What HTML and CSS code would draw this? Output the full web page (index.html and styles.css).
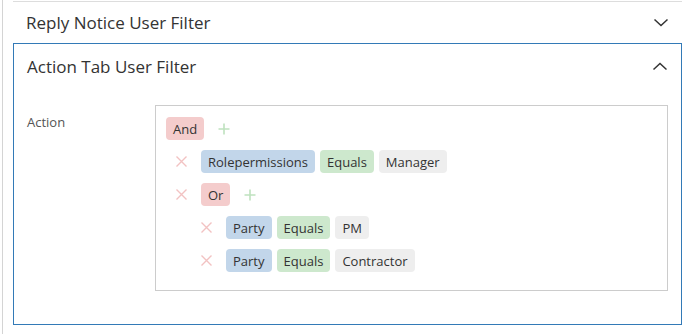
FILE: index.html
```html
<!DOCTYPE html>
<html>
<head>
<meta charset="utf-8">
<link rel="stylesheet" href="styles.css">
</head>
<body>
<div class="frame">
  <div class="panels">
    <div class="panel panel-closed">
      <div class="panel-head">
        <span class="panel-title">Reply Notice User Filter</span>
        <svg class="chev" width="16" height="9" viewBox="0 0 16 9"><path d="M1.5 1.5 L8 7.5 L14.5 1.5" fill="none" stroke="#333" stroke-width="1.5"/></svg>
      </div>
    </div>
    <div class="panel panel-open">
      <div class="panel-head">
        <span class="panel-title">Action Tab User Filter</span>
        <svg class="chev" width="16" height="9" viewBox="0 0 16 9"><path d="M1.5 7.5 L8 1.5 L14.5 7.5" fill="none" stroke="#333" stroke-width="1.5"/></svg>
      </div>
      <div class="panel-body">
        <div class="field-label">Action</div>
        <div class="query">
          <div class="row">
            <span class="chip chip-op">And</span>
            <svg class="add" width="12" height="12" viewBox="0 0 12 12"><path d="M6 0.5 V11.5 M0.5 6 H11.5" stroke="#bfe2bf" stroke-width="1.6"/></svg>
          </div>
          <div class="children level1">
            <div class="row">
              <svg class="del" width="11" height="11" viewBox="0 0 11 11"><path d="M0.5 0.5 L10.5 10.5 M10.5 0.5 L0.5 10.5" stroke="#f2c2c2" stroke-width="1.4"/></svg>
              <span class="chip chip-field">Rolepermissions</span>
              <span class="chip chip-cmp">Equals</span>
              <span class="chip chip-val">Manager</span>
            </div>
            <div class="row">
              <svg class="del" width="11" height="11" viewBox="0 0 11 11"><path d="M0.5 0.5 L10.5 10.5 M10.5 0.5 L0.5 10.5" stroke="#f2c2c2" stroke-width="1.4"/></svg>
              <span class="chip chip-op">Or</span>
              <svg class="add" width="12" height="12" viewBox="0 0 12 12"><path d="M6 0.5 V11.5 M0.5 6 H11.5" stroke="#bfe2bf" stroke-width="1.6"/></svg>
            </div>
            <div class="children level2">
              <div class="row">
                <svg class="del" width="11" height="11" viewBox="0 0 11 11"><path d="M0.5 0.5 L10.5 10.5 M10.5 0.5 L0.5 10.5" stroke="#f2c2c2" stroke-width="1.4"/></svg>
                <span class="chip chip-field">Party</span>
                <span class="chip chip-cmp">Equals</span>
                <span class="chip chip-val">PM</span>
              </div>
              <div class="row">
                <svg class="del" width="11" height="11" viewBox="0 0 11 11"><path d="M0.5 0.5 L10.5 10.5 M10.5 0.5 L0.5 10.5" stroke="#f2c2c2" stroke-width="1.4"/></svg>
                <span class="chip chip-field">Party</span>
                <span class="chip chip-cmp">Equals</span>
                <span class="chip chip-val">Contractor</span>
              </div>
            </div>
          </div>
        </div>
      </div>
    </div>
  </div>
</div>
</body>
</html>
```
FILE: styles.css
```css
html, body {
  margin: 0;
  padding: 0;
  background: #fff;
}
body {
  font-family: "Open Sans", "Noto Sans", sans-serif;
  color: #333;
  width: 691px;
  height: 334px;
  overflow: hidden;
}
.frame {
  margin-left: 2px;
  border-left: 1px solid #d4d4d4;
  height: 334px;
}
.panels {
  padding: 1px 9px 0 10px;
}
.panel-closed {
  border-top: 1px solid #dddddd;
}
.panel-head {
  display: flex;
  align-items: center;
  justify-content: space-between;
  padding: 0 13px 0 13px;
}
.panel-closed .panel-head {
  height: 41px;
}
.panel-open {
  border: 1px solid #337ab7;
  height: 280px;
}
.panel-open .panel-head {
  height: 44px;
}
.panel-title {
  font-size: 17px;
  color: #333;
}
.chev {
  display: block;
}
.panel-body {
  display: flex;
  padding: 17px 13px 0 13px;
}
.field-label {
  width: 128px;
  font-size: 13px;
  color: #555;
  padding-top: 8px;
}
.query {
  flex: 1;
  border: 1px solid #cccccc;
  height: 158px;
  padding: 11px 10px 15px 10px;
}
.row {
  display: flex;
  align-items: center;
  gap: 5px;
  height: 23px;
  margin-bottom: 10px;
}
.children .row:last-child {
  margin-bottom: 0;
}
.level1 {
  padding-left: 10px;
}
.level2 {
  padding-left: 25px;
  margin-top: 10px;
}
.level1 > .row {
  margin-bottom: 10px;
}
.level1 > .row:nth-child(2) {
  margin-bottom: 0;
}
.chip {
  display: inline-flex;
  align-items: center;
  height: 23px;
  padding: 0 7px;
  border-radius: 4px;
  font-size: 13px;
  color: #333;
  box-sizing: border-box;
}
.chip-op { background: #f4cccc; }
.chip-field { background: #c2d6ea; }
.chip-cmp { background: #cde8cd; }
.chip-val { background: #eeeeee; }
.add {
  display: block;
  margin-left: 9px;
}
.del {
  display: block;
  margin-right: 9px;
}
```
